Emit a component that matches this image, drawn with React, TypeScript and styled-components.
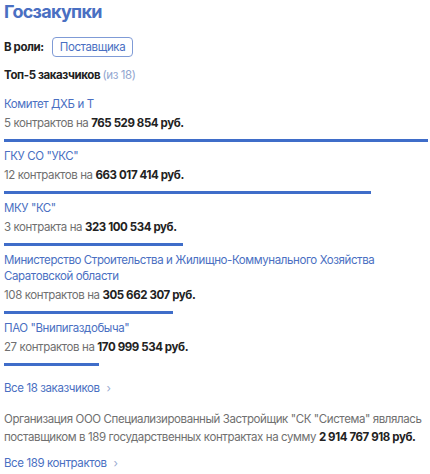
import React from "react";
import styled, { createGlobalStyle } from "styled-components";

const GlobalStyle = createGlobalStyle`
  body {
    margin: 0;
    background: #fff;
    font-family: Inter, "Noto Sans", sans-serif;
    -webkit-font-smoothing: antialiased;
  }
`;

const Page = styled.div`
  padding: 0 2px 0 4px;
  color: #222;
  font-size: 11.5px;
  letter-spacing: -0.4px;
`;

const Title = styled.h2`
  margin: 0;
  font-size: 18px;
  line-height: 24px;
  font-weight: 700;
  letter-spacing: -0.7px;
  color: #4a6fc2;
`;

const RoleRow = styled.div`
  display: flex;
  align-items: center;
  gap: 8px;
  margin-top: 13px;
  font-weight: 700;
`;

const Badge = styled.span`
  display: inline-flex;
  align-items: center;
  height: 18px;
  padding: 0 7px;
  border: 1px solid #7f9bd6;
  border-radius: 4px;
  color: #4a6fc2;
  font-weight: 400;
`;

const Subtitle = styled.div`
  margin-top: 9px;
  line-height: 18px;
  font-weight: 700;
`;

const Muted = styled.span`
  font-weight: 400;
  color: #93a6cf;
`;

const List = styled.div`
  margin-top: 12px;
  display: flex;
  flex-direction: column;
`;

const Item = styled.div`
  display: flex;
  flex-direction: column;
  padding-bottom: 6px;
`;

const Name = styled.div`
  color: #4a6fc2;
  line-height: 16px;
`;

const Amount = styled.div`
  margin-top: 2px;
  line-height: 18px;
  color: #707070;
`;

const Strong = styled.b`
  font-weight: 700;
  color: #222;
`;

const Bar = styled.div`
  margin-top: 7px;
  height: 3px;
  background: #3f6dc9;
`;

const MoreLink = styled.a<{ $top: number }>`
  display: block;
  margin-top: ${(p) => p.$top}px;
  line-height: 18px;
  color: #4a6fc2;
  text-decoration: none;
`;

const Chevron = styled.span`
  margin-left: 7px;
  color: #9aaad0;
`;

const Summary = styled.p`
  margin: 13px 0 0;
  line-height: 18px;
  color: #707070;
`;

const customers = [
  { name: "Комитет ДХБ и Т", count: "5 контрактов", sum: 765529854 },
  { name: "ГКУ СО \"УКС\"", count: "12 контрактов", sum: 663017414 },
  { name: "МКУ \"КС\"", count: "3 контракта", sum: 323100534 },
  {
    name: "Министерство Строительства и Жилищно-Коммунального Хозяйства Саратовской области",
    count: "108 контрактов",
    sum: 305662307,
  },
  { name: "ПАО \"Внипигаздобыча\"", count: "27 контрактов", sum: 170999534 },
];

const fmt = (n: number) => n.toLocaleString("ru-RU").replace(/\s/g, " ");

const App = () => {
  const max = customers[0].sum;
  return (
    <Page>
      <GlobalStyle />
      <Title>Госзакупки</Title>
      <RoleRow>
        В роли: <Badge>Поставщика</Badge>
      </RoleRow>
      <Subtitle>
        Топ-5 заказчиков <Muted>(из 18)</Muted>
      </Subtitle>
      <List>
        {customers.map((c) => (
          <Item key={c.name}>
            <Name>{c.name}</Name>
            <Amount>
              {c.count} на <Strong>{fmt(c.sum)} руб.</Strong>
            </Amount>
            <Bar style={{ width: `${(c.sum / max) * 100}%` }} />
          </Item>
        ))}
      </List>
      <MoreLink href="#" $top={7}>
        Все 18 заказчиков<Chevron>›</Chevron>
      </MoreLink>
      <Summary>
        Организация ООО Специализированный Застройщик "СК "Система" являлась
        поставщиком в 189 государственных контрактах на сумму{" "}
        <Strong>2 914 767 918 руб.</Strong>
      </Summary>
      <MoreLink href="#" $top={8}>
        Все 189 контрактов<Chevron>›</Chevron>
      </MoreLink>
    </Page>
  );
};

export default App;
